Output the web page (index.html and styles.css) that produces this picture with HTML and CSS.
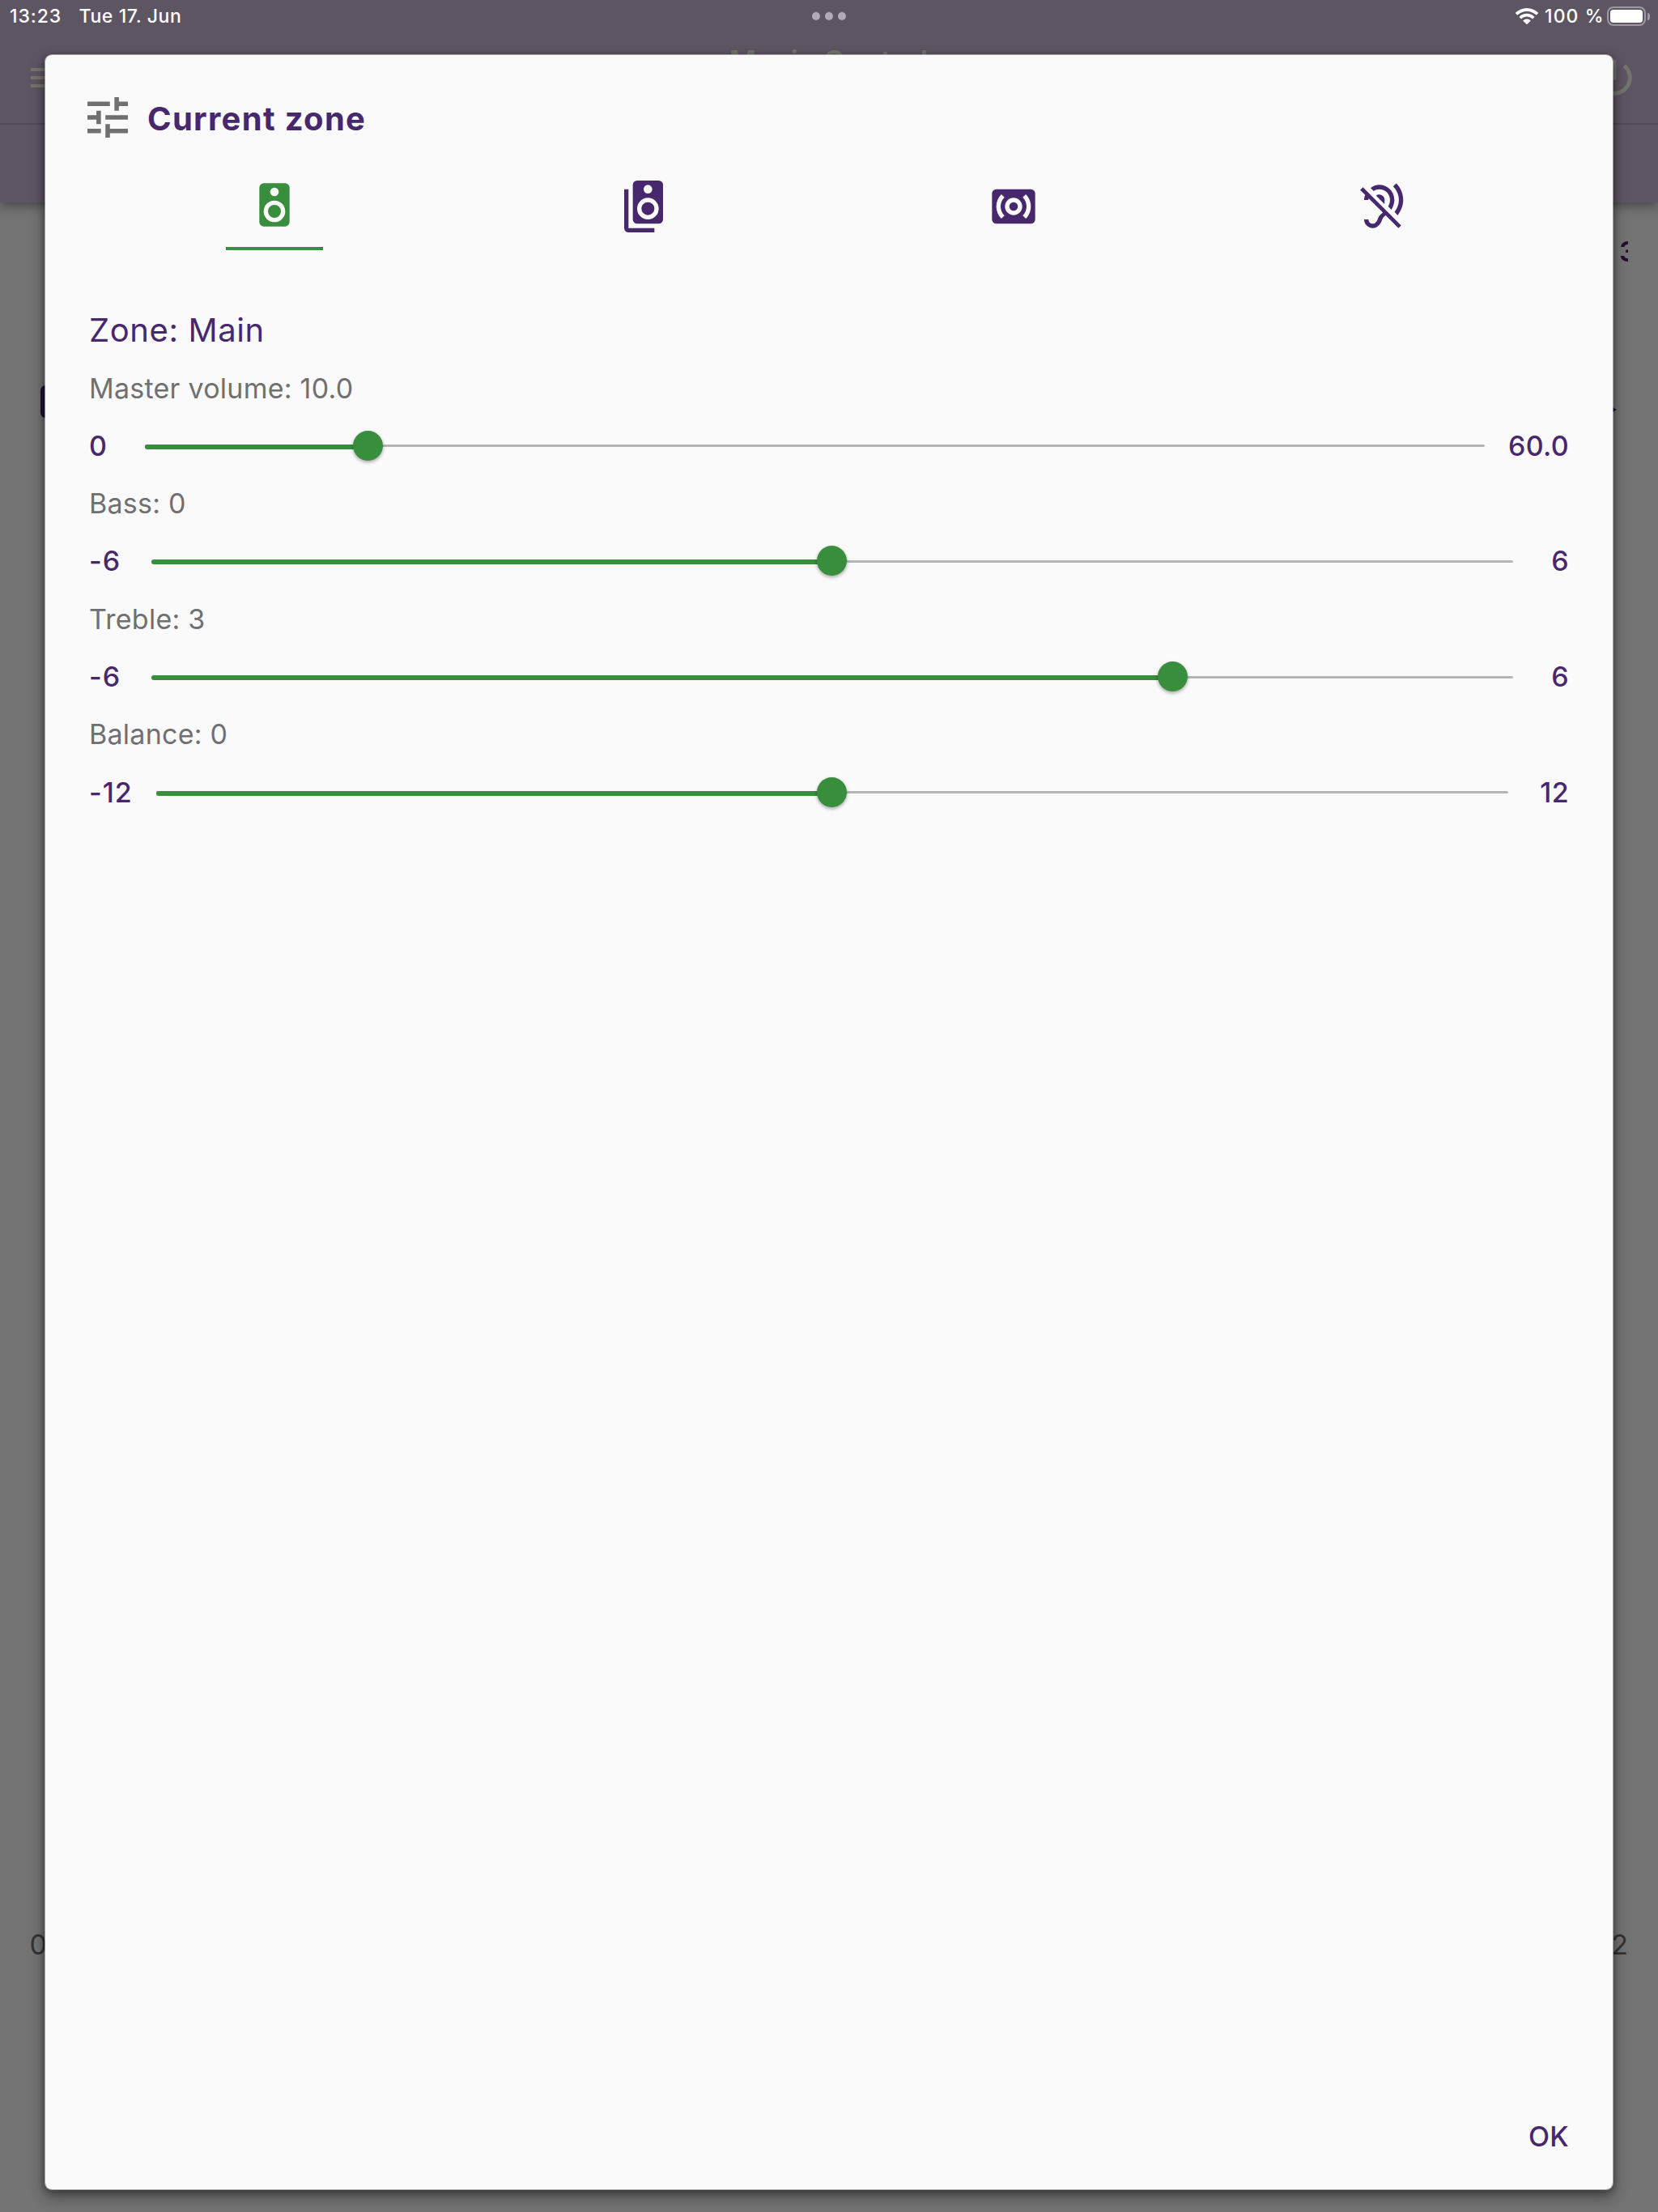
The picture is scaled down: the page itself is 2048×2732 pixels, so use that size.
FILE: index.html
```html
<!DOCTYPE html>
<html lang="en">
<head>
<meta charset="utf-8">
<title>Music Control</title>
<link rel="stylesheet" href="styles.css">
</head>
<body>
<div class="screen">
  <header class="app-header">
    <div class="status-bar">
      <span class="time">13:23</span>
      <span class="date">Tue 17. Jun</span>
      <span class="multitask"><i></i><i></i><i></i></span>
      <svg class="wifi" viewBox="0 0 28 20">
        <path d="M14 0C8.6 0 3.8 2.1.2 5.5c-.3.3-.3.7 0 1l1.7 1.7c.3.3.7.3 1 0C5.800 5.500 9.700 3.900 14 3.900s8.200 1.600 11.100 4.300c.3.3.7.3 1 0l1.700-1.700c.3-.3.3-.7 0-1C24.200 2.100 19.400 0 14 0zM14 6.800c-3.500 0-6.700 1.400-9.100 3.600-.3.3-.3.7 0 1l1.700 1.700c.3.300.700.300 1 0 1.700-1.600 4-2.500 6.400-2.500s4.700.9 6.400 2.500c.3.300.700.300 1 0l1.700-1.700c.3-.3.300-.700 0-1C20.700 8.200 17.500 6.800 14 6.800zM14 13.500c-1.700 0-3.200.6-4.400 1.600-.3.300-.3.700 0 1l3.900 3.700c.3.300.7.300 1 0l3.900-3.700c.3-.3.300-.7 0-1-1.200-1-2.700-1.600-4.400-1.600z" fill="#fff"/>
      </svg>
      <span class="percent">100 %</span>
      <span class="battery"><i></i></span>
      <span class="battery-cap"></span>
    </div>
    <div class="app-bar">
      <svg class="menu" viewBox="3 6 18 12"><path d="M3 6h18v2H3zM3 11h18v2H3zM3 16h18v2H3z" fill="#75756f"/></svg>
      <span class="app-title">Music Control</span>
      <svg class="power" viewBox="0 0 24 24"><path d="M13 3h-2v10h2V3zm4.830 2.170l-1.420 1.420C17.990 7.860 19 9.810 19 12c0 3.870-3.130 7-7 7s-7-3.130-7-7c0-2.190 1.010-4.140 2.580-5.420L6.170 5.170C4.230 6.820 3 9.260 3 12c0 4.970 4.030 9 9 9s9-4.030 9-9c0-2.740-1.230-5.180-3.170-6.830z" fill="#75756f"/></svg>
    </div>
  </header>
  <span class="zone-digit">3</span>
  <span class="album-edge"></span>
  <span class="arrow-tip"></span>
  <span class="elapsed">0</span>
  <span class="remaining">2</span>

  <section class="dialog">
    <div class="dialog-head">
      <svg class="tune" viewBox="3 3 18 18"><path d="M3 17v2h6v-2H3zM3 5v2h10V5H3zm10 16v-2h8v-2h-8v-2h-2v6h2zM7 9v2H3v2h4v2h2V9H7zm14 4v-2H11v2h10zm-6-4h2V7h4V5h-4V3h-2v6z"/></svg>
      <h1>Current zone</h1>
    </div>
    <nav class="tabs">
      <div class="tab active">
        <svg viewBox="0 0 24 24"><path fill-rule="evenodd" d="M12 12a3 3 0 1 0 0 6a3 3 0 1 0 0-6zM12 10a5 5 0 1 0 0 10a5 5 0 1 0 0-10zM12 4a2 2 0 1 0 0 4a2 2 0 1 0 0-4zM7 2h10a2 2 0 0 1 2 2v16a2 2 0 0 1-2 2H7a2 2 0 0 1-2-2V4a2 2 0 0 1 2-2z"/></svg>
      </div>
      <div class="tab">
        <svg viewBox="0 0 24 24"><path fill-rule="evenodd" d="M14 10a3 3 0 1 0 0 6a3 3 0 1 0 0-6zM14 8a5 5 0 1 0 0 10a5 5 0 1 0 0-10zM14 2a2 2 0 1 0 0 4a2 2 0 1 0 0-4zM9 0h10a2 2 0 0 1 2 2v16a2 2 0 0 1-2 2H9a2 2 0 0 1-2-2V2a2 2 0 0 1 2-2zM5 22h12v2H5a2 2 0 0 1-2-2V4h2z"/></svg>
      </div>
      <div class="tab">
        <svg viewBox="0 0 24 24"><path fill-rule="evenodd" d="M12 8a4 4 0 1 0 0 8a4 4 0 1 0 0-8zM12 10a2 2 0 1 0 0 4a2 2 0 1 0 0-4zM20 4H4A2 2 0 0 0 2 6V18A2 2 0 0 0 4 20H20A2 2 0 0 0 22 18V6A2 2 0 0 0 20 4zM7.760 16.240L6.340 17.660C4.780 16.100 4 14.050 4 12C4 9.950 4.780 7.900 6.340 6.340L7.760 7.760C6.590 8.930 6 10.460 6 12C6 13.540 6.590 15.070 7.760 16.240zM17.660 17.660L16.240 16.240C17.410 15.070 18 13.540 18 12C18 10.460 17.410 8.930 16.240 7.760L17.660 6.340C19.220 7.900 20 9.950 20 12C20 14.050 19.220 16.100 17.660 17.660z"/></svg>
      </div>
      <div class="tab">
        <svg viewBox="0 0 24 24"><path d="M6 3.500C7.150 2.500 8.510 2 10 2c3.930 0 7 3.070 7 7c0 1.260-.38 2.650-1.070 3.900l-.3.600-1.480-1.480C14.770 10.900 15 9.800 15 9c0-2.800-2.200-5-5-5c-.95 0-1.800.3-2.550.850zM17.100 14.500l1.430 1.600C20.110 13.930 21.100 11.570 21.100 9c0-2.930-1.160-5.700-3.240-7.700l-1.430 1.430C18.070 4.400 19.100 6.500 19.100 9C19.100 11.020 18.330 12.880 17.100 14.500zM10 6.500c-.6 0-1.050.180-1.450.500l3.850 3.850c.07-.5.100-1.200.1-1.850C12.500 7.620 11.380 6.500 10 6.500zM20.150 20.800L2.450 3.100L1.150 4.400L3.500 6.700C3.150 7.500 3 8.200 3 9h2c0-.3.030-.5.080-.75l6.620 6.600c-.95.800-1.750 1.400-2.240 2.600c-.5 1.500-1 2.010-1.710 2.380C7.560 19.940 7.290 20 7 20c-1.100 0-2-.9-2-2H3c0 2.210 1.790 4 4 4c.57 0 1.130-.12 1.640-.35c1.360-.71 2.130-1.730 2.730-3.550c.32-.98.9-1.430 1.630-1.950l5.900 5.900z"/></svg>
      </div>
    </nav>
    <h2>Zone: Main</h2>
    <div class="control volume">
      <div class="caption">Master volume: 10.0</div>
      <div class="slider-row"><span>0</span><div class="track"><div class="fill" style="width:16.667%"></div></div><span class="max">60.0</span></div>
    </div>
    <div class="control">
      <div class="caption">Bass: 0</div>
      <div class="slider-row"><span>-6</span><div class="track"><div class="fill" style="width:50%"></div></div><span class="max">6</span></div>
    </div>
    <div class="control">
      <div class="caption">Treble: 3</div>
      <div class="slider-row"><span>-6</span><div class="track"><div class="fill" style="width:75%"></div></div><span class="max">6</span></div>
    </div>
    <div class="control balance">
      <div class="caption">Balance: 0</div>
      <div class="slider-row"><span>-12</span><div class="track"><div class="fill" style="width:50%"></div></div><span class="max">12</span></div>
    </div>
    <footer class="actions"><button>OK</button></footer>
  </section>
</div>
</body>
</html>
```
FILE: styles.css
```css
* { box-sizing: border-box; }

body {
  margin: 0;
  font-family: Inter, "Liberation Sans", sans-serif;
}

.screen {
  position: relative;
  width: 2048px;
  height: 2732px;
  padding: 67px 55px 27px;
  background: #737373;
  overflow: hidden;
  display: flex;
}

/* App behind the dialog */
.app-header {
  position: absolute;
  inset: 0 0 auto;
  height: 250px;
  background: #5e5563;
  box-shadow: 0 5px 12px rgba(0, 0, 0, .35);
}

.status-bar {
  position: relative;
  height: 40px;
  padding: 0 10px 0 12px;
  display: flex;
  align-items: center;
  color: #fff;
  font-size: 23px;
  font-weight: 500;
  white-space: nowrap;
}

.time { width: 85.5px; letter-spacing: .9px; }
.date { letter-spacing: .6px; }

.multitask {
  position: absolute;
  left: 1003px;
  top: 15px;
  display: flex;
  gap: 6px;
}

.multitask i {
  width: 10px;
  height: 10px;
  border-radius: 50%;
  background: #b3aab8;
}

.wifi { width: 28px; height: 20px; margin-left: auto; }
.percent { width: 72px; margin: 0 5px 0 8px; letter-spacing: 1.1px; }

.battery {
  width: 48px;
  height: 24px;
  padding: 2px;
  border: 2px solid #9e98a2;
  border-radius: 8px;
  display: flex;
}

.battery i { flex: 1; border-radius: 4px; background: #fff; }

.battery-cap {
  width: 3px;
  height: 9px;
  margin-left: 2px;
  border-radius: 0 4px 4px 0;
  background: #9e98a2;
}

.app-bar {
  height: 114px;
  padding: 0 25px 0 38px;
  border-bottom: 2px solid #534a57;
  display: flex;
  align-items: center;
  justify-content: space-between;
}

.menu { width: 36px; height: 24px; }

.app-title {
  color: #75756f;
  font-size: 36.500px;
  font-weight: 600;
  position: relative;
  left: 4px;
  top: -20px;
}

.power { width: 58px; height: 58px; }

.zone-digit {
  position: absolute;
  left: 2000px;
  top: 290px;
  width: 11px;
  overflow: hidden;
  color: #1f1035;
  font-size: 34px;
  font-weight: 600;
  line-height: 41px;
}

.album-edge {
  position: absolute;
  left: 50px;
  top: 476px;
  width: 40px;
  height: 40px;
  border-radius: 6px;
  background: #20123a;
}

.arrow-tip {
  position: absolute;
  left: 1990px;
  top: 502px;
  border: 4px solid transparent;
  border-left: 7px solid #20123a;
  border-right: 0;
}

.elapsed, .remaining {
  position: absolute;
  top: 2381px;
  color: #333;
  font-size: 34px;
  line-height: 41px;
}

.elapsed { left: 36.500px; }
.remaining { right: 37px; }

/* Dialog */
.dialog {
  position: relative;
  flex: 1;
  padding: 0 54px 0 55px;
  border: 1px solid rgba(250, 250, 250, .5);
  border-radius: 9px;
  background: #fafafa;
  background-clip: padding-box;
  box-shadow: 0 8px 18px rgba(0, 0, 0, .4), 0 2px 8px rgba(0, 0, 0, .3);
  color: #47286d;
  display: flex;
  flex-direction: column;
}

.dialog-head {
  height: 130px;
  padding: 26px 0 2px;
  margin-left: -3px;
  display: flex;
  align-items: center;
  gap: 24px;
}

.tune { width: 50px; height: 50px; fill: #707070; }

h1 {
  margin: 3px 0 0;
  font-size: 40px;
  font-weight: 700;
  letter-spacing: 1.3px;
}

.tabs {
  height: 111px;
  margin: 0 1px 0 -.500px;
  display: grid;
  grid-template-columns: repeat(4, 1fr);
}

.tab {
  width: 120px;
  padding-top: 25px;
  justify-self: center;
  text-align: center;
}

.tab svg { width: 64px; height: 64px; fill: #47286d; }
.tab.active { padding-top: 23px; border-bottom: 4px solid #388e3c; }
.tab.active svg { fill: #388e3c; }

h2 {
  height: 72px;
  margin: 62.500px 0 0 -1px;
  font-size: 40px;
  font-weight: 400;
  line-height: 72px;
  letter-spacing: .6px;
}

.control {
  --start: 76px;
  --end: 69.500px;
  height: 142.667px;
  display: flex;
  flex-direction: column;
}

.control.volume { --start: 68px; --end: 104px; }
.control.balance { --start: 82px; --end: 75.500px; }

.caption {
  height: 71px;
  margin-left: -1px;
  line-height: 71px;
  color: #707070;
  font-size: 34px;
  letter-spacing: .25px;
}

.slider-row {
  flex: 1;
  display: grid;
  grid-template-columns: var(--start) 1fr var(--end);
  align-items: center;
  font-size: 34px;
  font-weight: 450;
  letter-spacing: 1px;
}

.slider-row span:first-child { margin-left: -1px; }
.max { text-align: right; letter-spacing: .3px; }

.track {
  height: 3px;
  margin-top: 1px;
  border-radius: 2px;
  background: #b5b5b5;
  display: flex;
  align-items: center;
}

.fill {
  position: relative;
  top: 1px;
  height: 6px;
  border-radius: 3px;
  background: #388e3c;
}

.fill::after {
  content: "";
  position: absolute;
  right: -18.500px;
  top: -17px;
  width: 37px;
  height: 37px;
  border-radius: 50%;
  background: #388e3c;
  box-shadow: 0 2px 4px rgba(0, 0, 0, .35);
}

.actions {
  margin-top: auto;
  height: 131px;
  display: flex;
  align-items: center;
  justify-content: flex-end;
}

button {
  padding: 0;
  border: 0;
  background: none;
  color: #47286d;
  font: 450 34px Inter, "Liberation Sans", sans-serif;
  letter-spacing: .3px;
}
```
